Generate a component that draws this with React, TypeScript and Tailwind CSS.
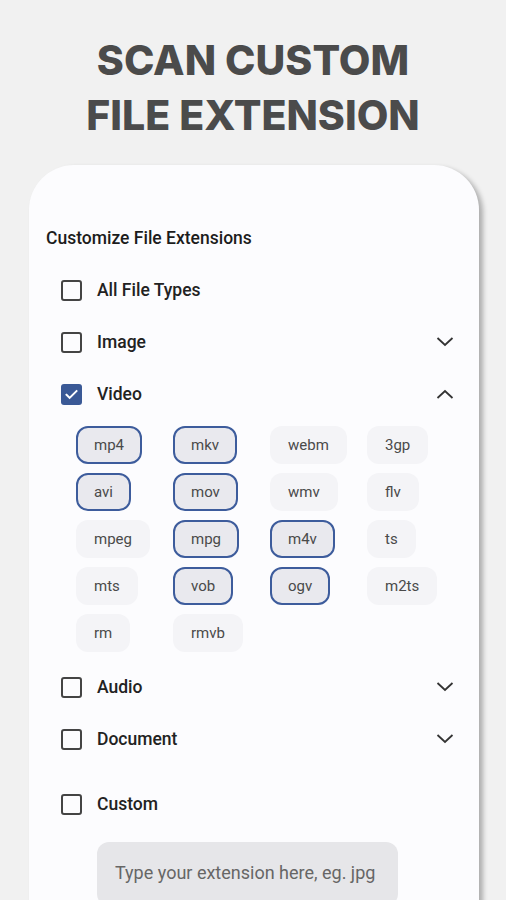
import React from 'react';

const font = { fontFamily: 'Roboto, "Noto Sans", sans-serif' };

const video = [
  { ext: 'mp4', on: true },
  { ext: 'mkv', on: true },
  { ext: 'webm', on: false },
  { ext: '3gp', on: false },
  { ext: 'avi', on: true },
  { ext: 'mov', on: true },
  { ext: 'wmv', on: false },
  { ext: 'flv', on: false },
  { ext: 'mpeg', on: false },
  { ext: 'mpg', on: true },
  { ext: 'm4v', on: true },
  { ext: 'ts', on: false },
  { ext: 'mts', on: false },
  { ext: 'vob', on: true },
  { ext: 'ogv', on: true },
  { ext: 'm2ts', on: false },
  { ext: 'rm', on: false },
  { ext: 'rmvb', on: false },
];

function Checkbox({ checked }: { checked?: boolean }) {
  if (checked) {
    return (
      <div className="w-[21px] h-[21px] rounded-[3px] bg-[#3a5996] flex items-center justify-center">
        <svg width="15" height="15" viewBox="0 0 24 24" fill="none" stroke="white" strokeWidth="3.2" strokeLinecap="square">
          <path d="M4 12.5l5 5L20 6.5" />
        </svg>
      </div>
    );
  }
  return <div className="w-[21px] h-[21px] rounded-[3px] border-2 border-[#444]" />;
}

function Chevron({ up }: { up?: boolean }) {
  return (
    <svg width="18" height="10" viewBox="0 0 18 10" fill="none" stroke="#333" strokeWidth="1.8">
      {up ? <path d="M1.5 9L9 2l7.5 7" /> : <path d="M1.5 1L9 8l7.5-7" />}
    </svg>
  );
}

function Row({ label, checked, chevron }: { label: string; checked?: boolean; chevron?: 'up' | 'down' }) {
  return (
    <div className="h-[52px] flex items-center pl-[32px] pr-[25px]">
      <Checkbox checked={checked} />
      <span className="ml-[15px] text-[17.5px] font-medium text-[#222] flex-1">{label}</span>
      {chevron && <Chevron up={chevron === 'up'} />}
    </div>
  );
}

export default function App() {
  return (
    <div className="w-[506px] h-[900px] overflow-hidden bg-[#f1f1f1]" style={font}>
      <h1
        className="pt-[33px] text-center text-[41px] leading-[55px] font-extrabold text-[#4b4b4b]"
        style={{ fontFamily: 'Inter, "DejaVu Sans", sans-serif' }}
      >
        SCAN CUSTOM
        <br />
        FILE EXTENSION
      </h1>
      <div className="mt-[22px] ml-[29px] w-[450px] h-[800px] rounded-t-[45px] bg-[#fcfcfe] shadow-[4px_3px_5px_rgba(0,0,0,0.28)] pt-[63px]">
        <div className="pl-[17px] h-[20px] flex items-center text-[17.5px] font-medium text-[#1c1c1c]">
          Customize File Extensions
        </div>
        <div className="mt-[16px]">
          <Row label="All File Types" />
          <Row label="Image" chevron="down" />
          <Row label="Video" checked chevron="up" />
        </div>
        <div className="mt-[6px] ml-[47px] grid grid-cols-[97px_97px_97px_97px] gap-y-[9px] justify-items-start">
          {video.map((v) =>
            v.on ? (
              <div
                key={v.ext}
                className="h-[38px] px-[16px] rounded-[12px] border-2 border-[#3d5c9c] bg-[#e9e9ee] flex items-center text-[15px] text-[#4a4a4a]"
              >
                {v.ext}
              </div>
            ) : (
              <div
                key={v.ext}
                className="h-[38px] px-[18px] rounded-[12px] bg-[#f4f4f7] flex items-center text-[15px] text-[#4a4a4a]"
              >
                {v.ext}
              </div>
            )
          )}
        </div>
        <div className="mt-[9px]">
          <Row label="Audio" chevron="down" />
          <Row label="Document" chevron="down" />
          <div className="mt-[13px]">
            <Row label="Custom" />
          </div>
        </div>
        <div className="mt-[12px] ml-[68px] w-[301px] h-[64px] rounded-[12px] bg-[#e6e6e9] flex items-center pl-[18px] pb-[4px] text-[18px] text-[#666]">
          Type your extension here, eg. jpg
        </div>
      </div>
    </div>
  );
}
